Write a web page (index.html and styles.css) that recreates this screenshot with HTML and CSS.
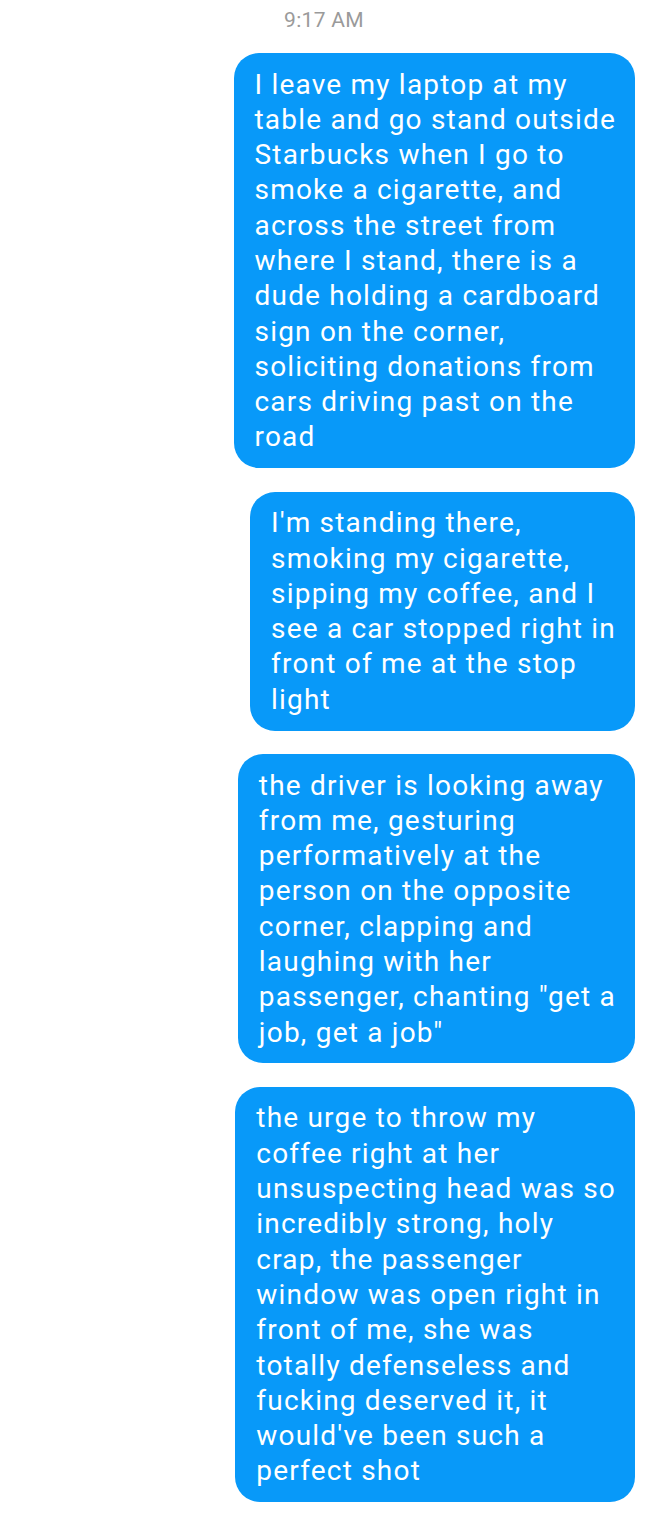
FILE: index.html
```html
<!DOCTYPE html>
<html>
<head>
<meta charset="utf-8">
<link rel="stylesheet" href="styles.css">
</head>
<body>
<div class="thread">
  <div class="time">9:17 AM</div>
  <div class="messages">
    <div class="bubble">I leave my laptop at my<br>table and go stand outside<br>Starbucks when I go to<br>smoke a cigarette, and<br>across the street from<br>where I stand, there is a<br>dude holding a cardboard<br>sign on the corner,<br>soliciting donations from<br>cars driving past on the<br>road</div>
    <div class="bubble">I'm standing there,<br>smoking my cigarette,<br>sipping my coffee, and I<br>see a car stopped right in<br>front of me at the stop<br>light</div>
    <div class="bubble">the driver is looking away<br>from me, gesturing<br>performatively at the<br>person on the opposite<br>corner, clapping and<br>laughing with her<br>passenger, chanting "get a<br>job, get a job"</div>
    <div class="bubble">the urge to throw my<br>coffee right at her<br>unsuspecting head was so<br>incredibly strong, holy<br>crap, the passenger<br>window was open right in<br>front of me, she was<br>totally defenseless and<br>fucking deserved it, it<br>would've been such a<br>perfect shot</div>
  </div>
</div>
</body>
</html>
```
FILE: styles.css
```css
html, body {
  margin: 0;
  padding: 0;
  background: #ffffff;
}
body {
  font-family: Roboto, "Noto Sans", sans-serif;
  width: 648px;
}
.thread {
  display: flex;
  flex-direction: column;
}
.time {
  text-align: center;
  color: #9a9a9a;
  font-size: 21px;
  line-height: 40px;
  height: 40px;
  margin-bottom: 13px;
  letter-spacing: 0.3px;
}
.messages {
  display: flex;
  flex-direction: column;
  align-items: flex-end;
  gap: 23.5px;
  padding-right: 13px;
  padding-bottom: 17px;
}
.bubble {
  background: #0899f9;
  color: #ffffff;
  border-radius: 25px;
  font-size: 28px;
  line-height: 35.3px;
  letter-spacing: 1.2px;
  padding: 13.5px 19px 13.5px 21px;
  white-space: nowrap;
}
```
